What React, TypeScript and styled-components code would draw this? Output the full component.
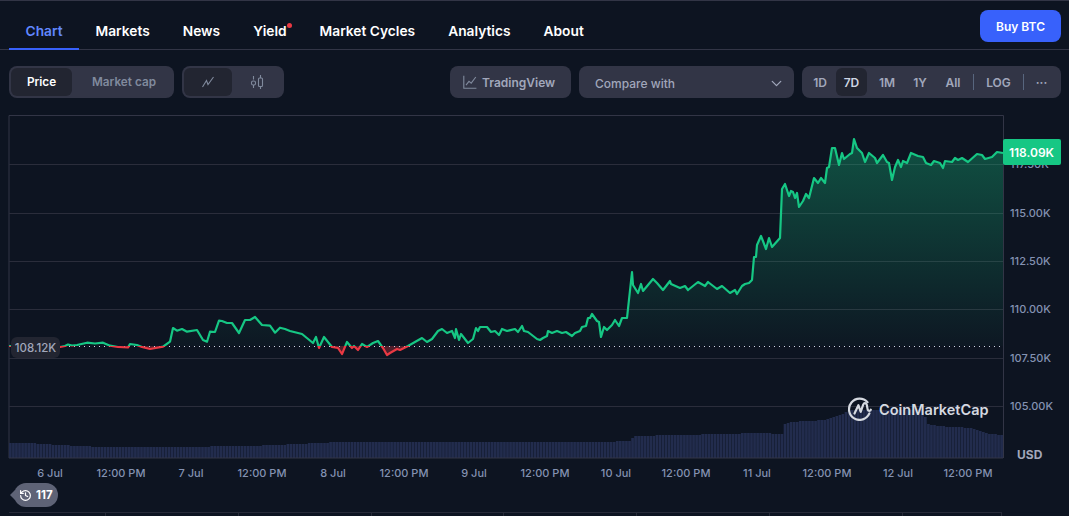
import React from "react";
import styled, { createGlobalStyle } from "styled-components";
import { History, ChevronDown } from "lucide-react";

const GlobalStyle = createGlobalStyle`
  html, body {
    margin: 0;
    padding: 0;
    background: #0d1421;
    overflow: hidden;
  }
  * {
    box-sizing: border-box;
  }
`;

const Page = styled.div`
  width: 1069px;
  height: 516px;
  display: flex;
  flex-direction: column;
  border-top: 1px solid #323546;
  background: #0d1421;
  font-family: Inter, "Liberation Sans", sans-serif;
  overflow: hidden;
`;

const Nav = styled.div`
  height: 49px;
  flex: none;
  display: flex;
  justify-content: space-between;
  padding: 0 8px 0 9px;
  border-bottom: 1px solid #323546;
`;

const Tabs = styled.div`
  display: flex;
  align-items: stretch;
`;

const Tab = styled.div<{ $active?: boolean }>`
  position: relative;
  display: flex;
  align-items: center;
  padding: 12px 16.5px 0;
  height: 49px;
  font-size: 13.75px;
  font-weight: 600;
  color: ${(p) => (p.$active ? "#6188ff" : "#ffffff")};
  border-bottom: 2px solid ${(p) => (p.$active ? "#3861fb" : "transparent")};
`;

const RedDot = styled.span`
  position: absolute;
  top: 22px;
  right: 11px;
  width: 5px;
  height: 5px;
  border-radius: 50%;
  background: #ea3943;
`;

const BuyButton = styled.button`
  margin-top: 9px;
  width: 81px;
  height: 32px;
  border: 0;
  border-radius: 8px;
  background: #3861fb;
  color: #fff;
  font-family: inherit;
  font-size: 12px;
  font-weight: 600;
`;

const Toolbar = styled.div`
  flex: none;
  height: 32px;
  margin-top: 16px;
  padding: 0 8px 0 9px;
  display: flex;
  align-items: stretch;
  gap: 8px;
`;

const Group = styled.div`
  display: flex;
  align-items: stretch;
  padding: 2px;
  border-radius: 8px;
  background: #323546;
`;

const Segment = styled.div<{ $active?: boolean; $w: number }>`
  width: ${(p) => p.$w}px;
  display: flex;
  align-items: center;
  justify-content: center;
  border-radius: 6px;
  font-size: 11.75px;
  font-weight: 600;
  color: ${(p) => (p.$active ? "#ffffff" : "#808a9d")};
  background: ${(p) => (p.$active ? "#222531" : "transparent")};
`;

const MarketCapSegment = styled(Segment)`
  padding-left: 4px;
`;

const RangeItem = styled(Segment)<{ $active?: boolean; $w: number }>`
  font-size: 12px;
  color: ${(p) => (p.$active ? "#cfd6e4" : "#a1a7bb")};
`;

const Separator = styled.span`
  width: 1px;
  height: 16px;
  align-self: center;
  background: #58667e;
`;

const Spacer = styled.div`
  flex: 1;
`;

const TvButton = styled.div`
  width: 121px;
  display: flex;
  align-items: center;
  gap: 5px;
  padding-left: 13px;
  border-radius: 8px;
  background: #323546;
  color: #a1a7bb;
  font-size: 12px;
  font-weight: 600;
`;

const CompareSelect = styled.div`
  width: 215px;
  display: flex;
  align-items: center;
  justify-content: space-between;
  padding: 2px 9px 0 16px;
  border-radius: 8px;
  background: #323546;
  color: #a1a7bb;
  font-size: 12px;
  font-weight: 500;
`;

const ChartBox = styled.div`
  position: relative;
  flex: none;
  margin-top: 17px;
  height: 366px;
`;

const ChartSvg = styled.svg`
  display: block;
`;

const AxisLabel = styled.text`
  font-family: Inter, "Liberation Sans", sans-serif;
  font-size: 11px;
  font-weight: 500;
  fill: #8492b2;
`;

const UsdLabel = styled.text`
  font-family: Inter, "Liberation Sans", sans-serif;
  font-size: 12px;
  font-weight: 700;
  fill: #a1a7bb;
`;

const PriceTag = styled.div`
  position: absolute;
  left: 1003px;
  top: 24px;
  width: 58px;
  height: 26px;
  display: flex;
  align-items: center;
  justify-content: center;
  padding-right: 1px;
  border-radius: 2px;
  background: #16c784;
  color: #fff;
  font-size: 12px;
  font-weight: 600;
`;

const BaseTag = styled.div`
  position: absolute;
  left: 11px;
  top: 222px;
  width: 49px;
  height: 21px;
  display: flex;
  align-items: center;
  justify-content: center;
  border-radius: 6px;
  background: #222531;
  color: #a1a7bb;
  font-size: 11.5px;
  font-weight: 500;
`;

const Watermark = styled.div`
  position: absolute;
  left: 848px;
  top: 282px;
  display: flex;
  align-items: center;
  gap: 7px;
  color: #d5d9e0;
  font-size: 14.5px;
  font-weight: 600;
`;

const HistoryRow = styled.div`
  flex: none;
  height: 31px;
  padding: 2px 0 0 10px;
  display: flex;
  align-items: flex-start;
`;

const HistoryPill = styled.div`
  position: relative;
  margin-left: 4px;
  width: 44px;
  height: 24px;
  display: flex;
  align-items: center;
  gap: 4px;
  padding-left: 5px;
  border-radius: 12px;
  background: #5e6376;
  color: #fff;
  font-size: 11.5px;
  font-weight: 700;

  &::before {
    content: "";
    position: absolute;
    left: -4px;
    top: 7px;
    border-style: solid;
    border-width: 5px 5px 5px 0;
    border-color: transparent #5e6376 transparent transparent;
  }
`;

const TableHead = styled.div`
  flex: none;
  margin-left: 9px;
  width: 993px;
  height: 20px;
  display: grid;
  grid-template-columns: 97px repeat(6, 132.8px) 99px;
  border-top: 1px solid #262a38;
`;

const HeadCell = styled.div`
  border-right: 1px solid #262a38;
`;

const LOGO_ARC = "M19.5 5.2A10.6 10.6 0 1 0 21.4 16.4";

const line: [number, number][] = [
  [9, 346], [40, 346], [60, 347], [65, 346], [68, 344.5], [72, 345.5], [77, 345], [87, 342.7], [95, 343.5], [103, 342.7],
  [110, 345.7], [118, 347], [128, 347.5], [130, 344], [137, 345], [142, 347], [150, 349], [163, 346.7],
  [170, 341.7], [173, 328], [177, 330.7], [182, 329], [187, 331.7], [197, 330], [203, 340], [207, 341.7],
  [210, 331.7], [215, 332], [219, 320.7], [222, 321], [227, 323], [232, 323], [239, 333], [245, 320],
  [250, 320], [255, 317], [262, 325], [270, 325.7], [275, 332.7], [280, 327.7], [285, 329], [290, 331],
  [302, 334], [313, 343], [316, 337], [319, 348], [324, 337], [332, 347], [338, 348], [342, 354],
  [347, 342], [352, 348], [354, 346], [358, 350], [362, 344], [367, 347], [373, 343], [378, 341],
  [383, 348], [387, 355], [390, 353], [397, 349], [400, 350], [408, 346], [422, 338], [427, 342],
  [432, 339], [438, 331], [442, 329], [447, 333], [452, 331], [455, 338], [456, 329], [459, 340],
  [461, 334], [468, 343], [473, 339], [476, 328], [478, 331], [480, 327], [487, 327], [491, 332],
  [495, 331], [499, 335], [502, 329], [507, 331], [515, 329], [518, 332], [522, 326], [524, 331],
  [528, 332], [537, 339], [540, 340], [543, 338], [547, 336], [548, 331], [552, 333], [557, 331],
  [562, 333], [566, 332], [572, 336], [575, 333], [580, 331], [582, 327], [586, 326], [588, 318],
  [590, 318], [592, 314], [597, 321], [599, 322], [601, 337], [604, 327], [607, 330], [612, 325],
  [615, 320], [619, 326], [622, 318], [627, 318], [632, 272], [633, 285], [638, 293], [641, 284],
  [643, 291], [653, 279], [657, 283], [663, 290], [670, 281], [671, 284], [680, 288], [685, 286],
  [688, 290], [698, 282], [705, 286], [708, 282], [717, 289], [722, 286], [730, 293], [735, 290],
  [737, 294], [742, 286], [745, 284], [749, 283], [752, 280], [754, 257], [756, 257], [757, 245],
  [761, 236], [766, 249], [769, 238], [772, 247], [780, 238], [782, 189], [785, 184], [789, 196],
  [791, 191], [793, 192], [795, 198], [797, 193], [799, 207], [803, 201], [806, 194], [809, 198],
  [814, 178], [818, 183], [821, 178], [825, 183], [827, 168], [829, 167], [832, 148], [835, 148],
  [839, 165], [842, 153], [844, 159], [850, 154], [852, 153], [854, 139], [857, 148], [862, 153],
  [865, 162], [869, 153], [875, 158], [877, 163], [883, 155], [887, 162], [889, 163], [892, 180],
  [895, 167], [898, 160], [901, 167], [903, 161], [907, 163], [911, 153], [918, 156], [923, 157],
  [926, 163], [931, 165], [934, 161], [940, 163], [943, 168], [945, 161], [952, 162], [955, 158],
  [958, 160], [962, 158], [968, 162], [977, 154], [982, 155], [985, 159], [992, 157], [997, 152],
  [1003, 153],
];

const BASE_Y = 346;
const linePath = line.map(([x, y], i) => `${i ? "L" : "M"}${x} ${y}`).join("");
const areaPath = `${linePath}L1003 ${BASE_Y}L9 ${BASE_Y}Z`;

const volumeTops: [number, number][] = [
  [9, 443], [35, 443.5], [60, 445], [90, 446.5], [170, 447], [250, 446], [340, 442], [480, 441.5], [600, 442],
  [630, 441], [632, 436], [700, 434.5], [760, 433], [777, 434], [781, 434], [782, 425], [790, 422],
  [823, 420], [840, 415], [848, 410], [923, 410], [925, 424], [937, 426], [970, 428], [987, 434], [1003, 435],
];

const volumeAt = (x: number) => {
  for (let i = 1; i < volumeTops.length; i++) {
    const [x0, y0] = volumeTops[i - 1];
    const [x1, y1] = volumeTops[i];
    if (x <= x1) return y0 + ((y1 - y0) * (x - x0)) / (x1 - x0);
  }
  return 435;
};

const volumeBars: number[] = [];
for (let x = 9; x < 1003; x += 3.05) volumeBars.push(x);

const gridLines = [
  { y: 164, label: "117.50K" },
  { y: 213, label: "115.00K" },
  { y: 261, label: "112.50K" },
  { y: 309, label: "110.00K" },
  { y: 358, label: "107.50K" },
  { y: 406, label: "105.00K" },
];

const timeLabels = [
  { x: 50, label: "6 Jul" },
  { x: 121, label: "12:00 PM" },
  { x: 191, label: "7 Jul" },
  { x: 262, label: "12:00 PM" },
  { x: 333, label: "8 Jul" },
  { x: 404, label: "12:00 PM" },
  { x: 474, label: "9 Jul" },
  { x: 545, label: "12:00 PM" },
  { x: 616, label: "10 Jul" },
  { x: 686, label: "12:00 PM" },
  { x: 757, label: "11 Jul" },
  { x: 827, label: "12:00 PM" },
  { x: 898, label: "12 Jul" },
  { x: 968, label: "12:00 PM" },
];

function LineIcon() {
  return (
    <svg width="14" height="14" viewBox="0 0 14 14" fill="none" stroke="#808a9d" strokeWidth="1.1">
      <path d="M1.5 12 5.5 5.5 7 9.5 12.5 2" />
    </svg>
  );
}

function CandleIcon() {
  return (
    <svg width="14" height="16" viewBox="0 0 14 16" fill="none" stroke="#808a9d" strokeWidth="1.1">
      <path d="M3.5 2v3.5M3.5 11v3M10.5 1v3M10.5 12.5V15" />
      <rect x="1.5" y="7" width="4" height="4" rx="1.6" />
      <rect x="8.5" y="4" width="4" height="8.5" rx="1" />
    </svg>
  );
}

function TvIcon() {
  return (
    <svg width="14" height="14" viewBox="0 0 14 14" fill="none" stroke="#808a9d" strokeWidth="1.1">
      <path d="M.8.8v12.4h12.6" />
      <path d="M3 10.2 6 6.4l2.2 1.8L12.8 2" />
    </svg>
  );
}

function CmcLogo() {
  return (
    <svg width="24" height="24" viewBox="0 0 24 24" fill="none" stroke="#d5d9e0" strokeWidth="2.2" strokeLinecap="round" strokeLinejoin="round">
      <path d={LOGO_ARC} />
      <path d="M6.5 16.5 10.4 8.2 12.7 14.8 15.2 7.6c1-2.2 3-1.6 3.6.2.5 1.7.3 4.5 1.4 5.6 1 .9 2.3.4 2.6-.7" />
    </svg>
  );
}

export default function App() {
  return (
    <Page>
      <GlobalStyle />
      <Nav>
        <Tabs>
          <Tab $active>Chart</Tab>
          <Tab>Markets</Tab>
          <Tab>News</Tab>
          <Tab>
            Yield
            <RedDot />
          </Tab>
          <Tab>Market Cycles</Tab>
          <Tab>Analytics</Tab>
          <Tab>About</Tab>
        </Tabs>
        <BuyButton>Buy BTC</BuyButton>
      </Nav>

      <Toolbar>
        <Group>
          <Segment $active $w={61}>Price</Segment>
          <MarketCapSegment $w={100}>Market cap</MarketCapSegment>
        </Group>
        <Group>
          <Segment $active $w={48}><LineIcon /></Segment>
          <Segment $w={50}><CandleIcon /></Segment>
        </Group>
        <Spacer />
        <TvButton>
          <TvIcon />
          TradingView
        </TvButton>
        <CompareSelect>
          Compare with
          <ChevronDown size={17} color="#a1a7bb" strokeWidth={1.8} />
        </CompareSelect>
        <Group>
          <RangeItem $w={32}>1D</RangeItem>
          <RangeItem $active $w={31}>7D</RangeItem>
          <RangeItem $w={40}>1M</RangeItem>
          <RangeItem $w={26}>1Y</RangeItem>
          <RangeItem $w={40}>All</RangeItem>
          <Separator />
          <RangeItem $w={49}>LOG</RangeItem>
          <Separator />
          <RangeItem $w={35}>···</RangeItem>
        </Group>
      </Toolbar>

      <ChartBox>
        <ChartSvg width="1069" height="366" viewBox="0 115 1069 366">
          <defs>
            <linearGradient id="greenFill" gradientUnits="userSpaceOnUse" x1="0" y1="140" x2="0" y2="346">
              <stop offset="0" stopColor="#16c784" stopOpacity="0.34" />
              <stop offset="1" stopColor="#16c784" stopOpacity="0.02" />
            </linearGradient>
            <clipPath id="aboveBase">
              <rect x="0" y="100" width="1069" height={BASE_Y - 100} />
            </clipPath>
            <clipPath id="belowBase">
              <rect x="0" y={BASE_Y} width="1069" height="120" />
            </clipPath>
          </defs>

          <path d="M9 458V115.5H1003.5V458" fill="none" stroke="#323546" />
          {gridLines.map((g) => (
            <line key={g.y} x1="9" x2="1003" y1={g.y + 0.5} y2={g.y + 0.5} stroke="#2a2d3b" />
          ))}

          <path d={areaPath} fill="url(#greenFill)" clipPath="url(#aboveBase)" />
          <path d={areaPath} fill="#ea3943" fillOpacity="0.3" clipPath="url(#belowBase)" />

          {volumeBars.map((x) => (
            <rect key={x} x={x} y={Math.round(volumeAt(x))} width="2.7" height={458 - Math.round(volumeAt(x))} fill="#222c4d" />
          ))}

          <line x1="9" x2="1003" y1={BASE_Y + 0.5} y2={BASE_Y + 0.5} stroke="#cfd6e4" strokeDasharray="1 4" />
          <path d={linePath} fill="none" stroke="#16c784" strokeWidth="2.2" strokeLinejoin="round" clipPath="url(#aboveBase)" />
          <path d={linePath} fill="none" stroke="#ea3943" strokeWidth="2.2" strokeLinejoin="round" clipPath="url(#belowBase)" />

          <line x1="9" x2="1003" y1="458" y2="458" stroke="#323546" />

          {gridLines.map((g) => (
            <AxisLabel key={g.label} x="1010" y={g.y + 4}>{g.label}</AxisLabel>
          ))}
          <UsdLabel x="1017" y="458.5">USD</UsdLabel>

          {timeLabels.map((t) => (
            <AxisLabel key={t.x} x={t.x} y="476.5" textAnchor="middle">{t.label}</AxisLabel>
          ))}
        </ChartSvg>
        <PriceTag>118.09K</PriceTag>
        <BaseTag>108.12K</BaseTag>
        <Watermark>
          <CmcLogo />
          CoinMarketCap
        </Watermark>
      </ChartBox>

      <HistoryRow>
        <HistoryPill>
          <History size={13} strokeWidth={2.2} />
          117
        </HistoryPill>
      </HistoryRow>

      <TableHead>
        <HeadCell />
        <HeadCell />
        <HeadCell />
        <HeadCell />
        <HeadCell />
        <HeadCell />
        <HeadCell />
        <HeadCell />
      </TableHead>
    </Page>
  );
}
